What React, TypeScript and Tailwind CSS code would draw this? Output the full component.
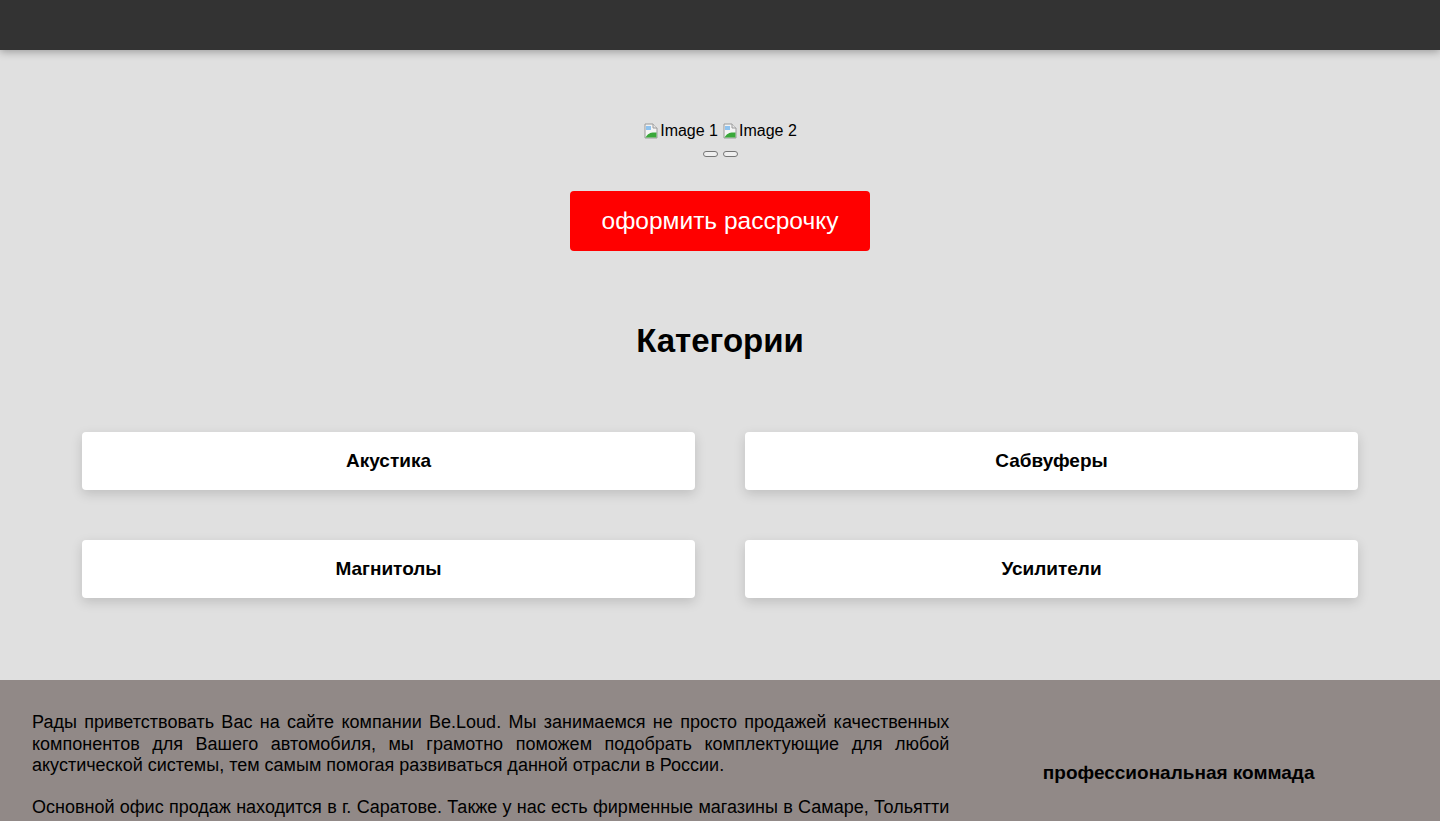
import React from "react";

function BrokenImage({ alt }: { alt: string }) {
  return (
    <span className="inline-flex items-center">
      <svg width="16" height="16" viewBox="0 0 16 16" className="mr-[1px]">
        <path d="M2 1h8l4 4v10H2z" fill="#f4f4f4" stroke="#9a9a9a" strokeWidth="1" />
        <path d="M10 1v4h4" fill="#e6e6e6" stroke="#9a9a9a" strokeWidth="1" />
        <path d="M2.5 14.5 C5 10 8 9 13.5 9.5 V14.5z" fill="#3aa83a" />
        <rect x="3" y="3" width="5" height="4" fill="#8fc3ef" />
      </svg>
      {alt}
    </span>
  );
}

const categories = ["Акустика", "Сабвуферы", "Магнитолы", "Усилители"];

export default function App() {
  return (
    <div
      className="min-h-screen bg-[#e0e0e0] text-black"
      style={{ fontFamily: '"Liberation Sans", Arial, sans-serif' }}
    >
      <header className="relative z-10 h-[50px] bg-[#333333] shadow-[0_2px_8px_rgba(0,0,0,0.3)]" />

      <main className="flex flex-col items-center pt-[72px] pb-[82px]">
        {/* slider */}
        <div className="flex flex-col items-center">
          <div className="flex items-center gap-[4px] text-base leading-[18px]">
            <BrokenImage alt="Image 1" />
            <BrokenImage alt="Image 2" />
          </div>
          <div className="mt-[11px] flex gap-[5px]">
            <button className="h-[6px] w-[15px] rounded-[3px] border border-[#767676] bg-[#efefef]" />
            <button className="h-[6px] w-[15px] rounded-[3px] border border-[#767676] bg-[#efefef]" />
          </div>
        </div>

        <button className="mt-[34px] h-[60px] w-[300px] rounded-[4px] bg-[#ff0000] text-[24.5px] text-white">
          оформить рассрочку
        </button>

        <h2 className="mt-[71px] text-[33px] font-bold leading-[38px]">Категории</h2>

        <div className="mt-[72px] grid w-full grid-cols-2 gap-[50px] px-[82px]">
          {categories.map((c) => (
            <div
              key={c}
              className="flex h-[58px] items-center justify-center rounded-[4px] bg-white text-[19px] font-bold shadow-[0_4px_12px_rgba(0,0,0,0.15)]"
            >
              {c}
            </div>
          ))}
        </div>
      </main>

      <footer className="flex bg-[#918987] px-[32px] pt-[32px] pb-[20px]">
        <div className="w-2/3 text-justify text-[18px] leading-[21.5px]">
          <p>
            Рады приветствовать Вас на сайте компании Be.Loud. Мы занимаемся не просто продажей
            качественных компонентов для Вашего автомобиля, мы грамотно поможем подобрать
            комплектующие для любой акустической системы, тем самым помогая развиваться данной
            отрасли в России.
          </p>
          <p className="mt-[20px]">
            Основной офис продаж находится в г. Саратове. Также у нас есть фирменные магазины в
            Самаре, Тольятти и других городах России.
          </p>
        </div>
        <div className="flex flex-1 justify-center pt-[50px]">
          <h3 className="text-[19px] font-bold leading-[22px]">профессиональная коммада</h3>
        </div>
      </footer>
    </div>
  );
}
